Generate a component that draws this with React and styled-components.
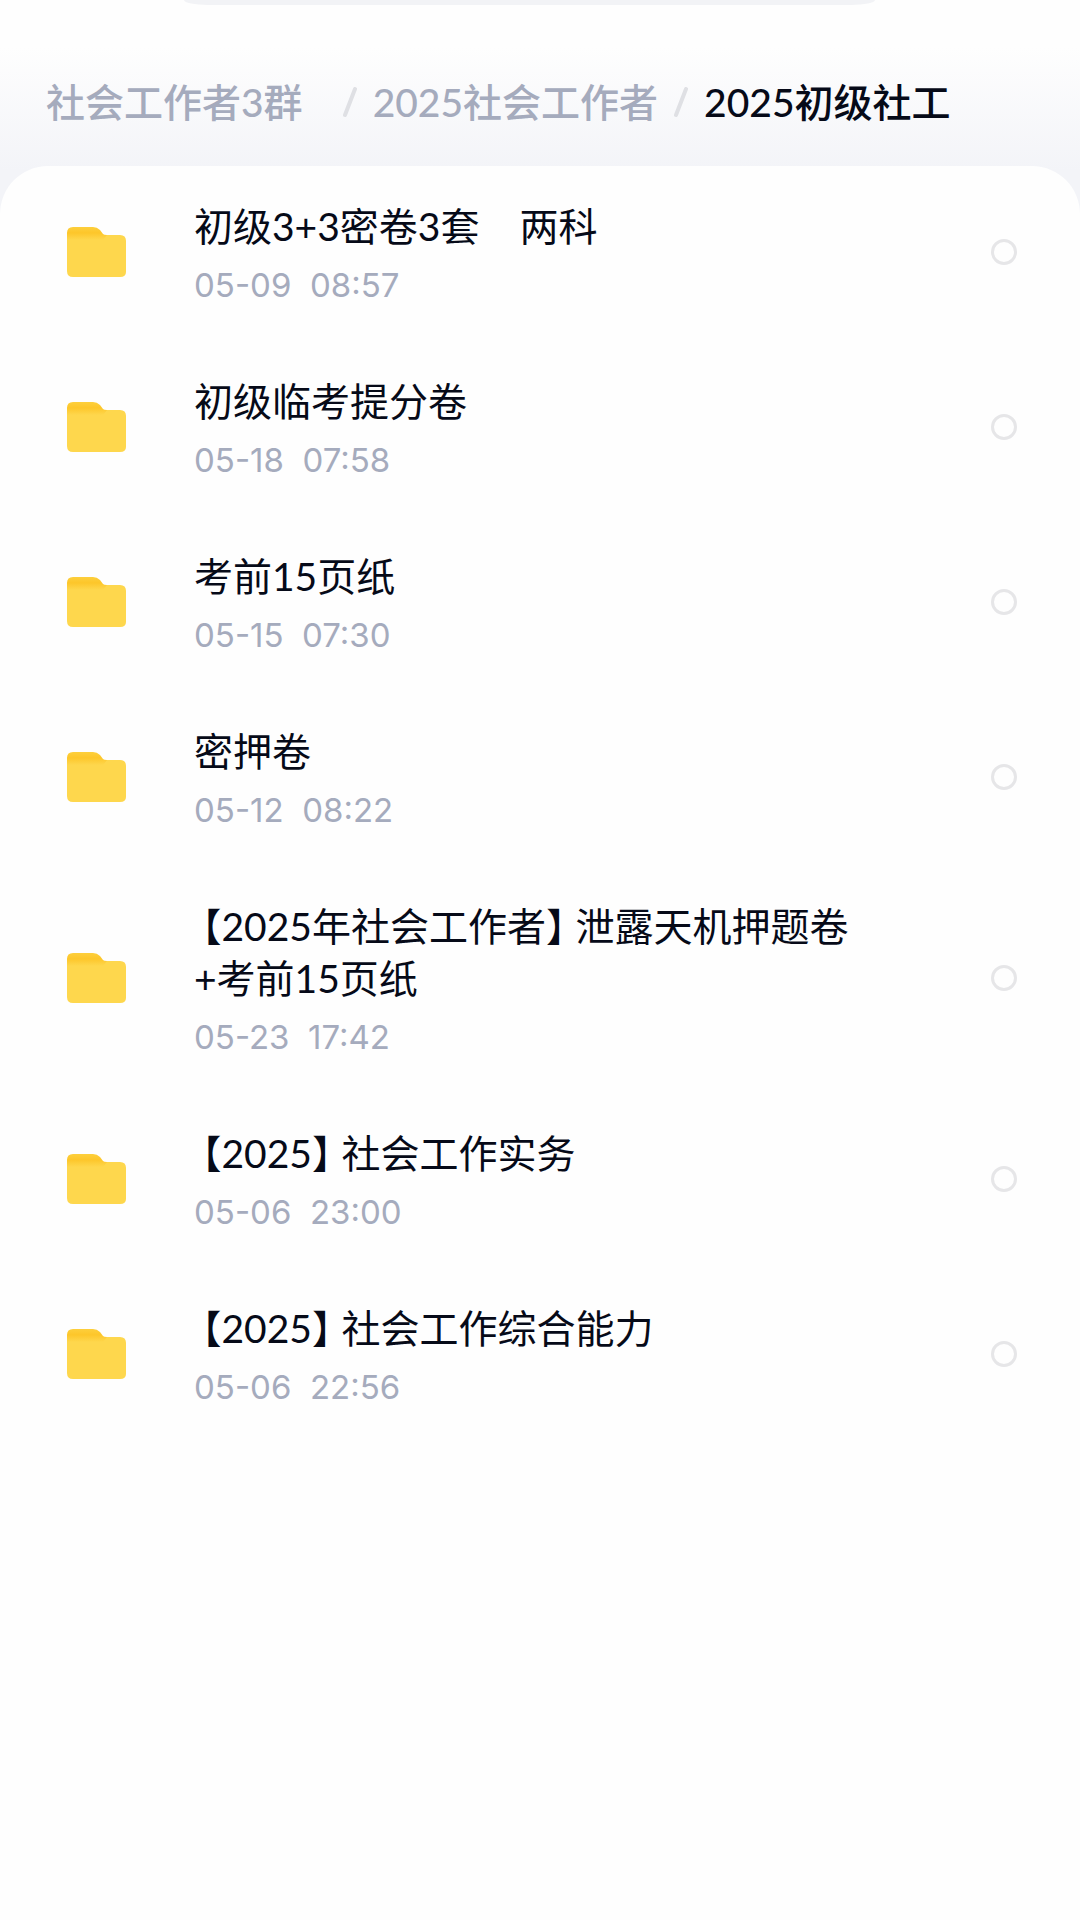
import React from "react";
import styled, { createGlobalStyle } from "styled-components";

const GlobalStyle = createGlobalStyle`
  *, *::before, *::after { box-sizing: border-box; }
  body {
    margin: 0;
    min-height: 100vh;
    background: #fefefe;
    color: #060a18;
    font-family: Lato, "Noto Sans CJK SC", sans-serif;
  }
`;

const Header = styled.header`
  background: linear-gradient(#fefefe 22%, #f3f4f8 80%);
  padding-bottom: 48px;
  margin-bottom: -48px;
`;

const SearchEdge = styled.div`
  height: 5px;
  margin: 0 19% 0 17%;
  background: #f2f3f6;
  border-radius: 0 0 24px 24px / 0 0 5px 5px;
`;

const Breadcrumb = styled.nav`
  display: flex;
  align-items: center;
  height: 161px;
  padding: 32px 46px 0;
  font-size: 39px;
  font-weight: 500;
  line-height: 52px;
  white-space: nowrap;
`;

const Crumb = styled.a`
  color: ${(p) => (p.$current ? "#060a18" : "#a5abbd")};
  text-decoration: none;
  padding-right: ${(p) => (p.$wide ? "24px" : "0")};
`;

const Slash = styled.svg`
  flex: none;
  width: 14px;
  height: 30px;
  margin: 0 16px;
`;

const Panel = styled.main`
  background: #fefefe;
  border-radius: 48px 48px 0 0;
`;

const List = styled.ul`
  list-style: none;
  margin: 0;
  padding: 0;
`;

const Row = styled.li`
  display: flex;
  align-items: center;
  padding: 30px 63px 34px 66px;
`;

const Folder = styled.svg`
  flex: none;
  width: 60px;
  height: 50px;
  margin-right: 68px;
`;

const Info = styled.label`
  flex: 1;
  min-width: 0;
  padding: 4px 120px 0 0;
`;

const Title = styled.span`
  display: block;
  font-size: 39px;
  line-height: 52px;
  white-space: pre-wrap;
  font-feature-settings: "halt";
  text-indent: ${(p) => (p.$bracketed ? "8px" : "0")};
`;

const Time = styled.time`
  display: block;
  margin-top: 11px;
  color: #a5abbd;
  font-family: Inter, "Noto Sans CJK SC", sans-serif;
  font-size: 33px;
  line-height: 44px;
  white-space: pre;
`;

const Pick = styled.input`
  appearance: none;
  flex: none;
  width: 26px;
  height: 26px;
  margin: 0;
  border: 3px solid #e6e6e8;
  border-radius: 50%;
  background: #fefefe;
  &:checked { background: #ffd84d; }
`;

const files = [
  { title: "初级3+3密卷3套    两科", time: "05-09  08:57" },
  { title: "初级临考提分卷", time: "05-18  07:58" },
  { title: "考前15页纸", time: "05-15  07:30" },
  { title: "密押卷", time: "05-12  08:22" },
  { title: "【2025年社会工作者】 泄露天机押题卷+考前15页纸", time: "05-23  17:42" },
  { title: "【2025】 社会工作实务", time: "05-06  23:00" },
  { title: "【2025】 社会工作综合能力", time: "05-06  22:56" },
];

const Separator = () => (
  <Slash viewBox="0 0 14 30" aria-hidden="true">
    <path d="M12 2 2 28" stroke="#dfe0e4" strokeWidth="4" strokeLinecap="round" />
  </Slash>
);

const FolderIcon = () => (
  <Folder viewBox="0 1 60 50" aria-hidden="true">
    <defs>
      <linearGradient id="tab" x1="0" y1="0" x2="0" y2="1">
        <stop offset="0" stopColor="#fdcf3c" />
        <stop offset="0.45" stopColor="#fdc62a" />
        <stop offset="1" stopColor="#fed74d" />
      </linearGradient>
    </defs>
    <path d="M1 13q0-4 4-4h49q6 0 6 6v31q0 5-6 5H7q-6 0-6-6z" fill="#fed74d" />
    <path d="M1 7q0-6 6-6h20q4 0 7 3l3 4q1 1 4 1l-4 5H1z" fill="url(#tab)" />
  </Folder>
);

export default function App() {
  return (
    <>
      <GlobalStyle />
      <Header>
        <SearchEdge />
        <Breadcrumb>
          <Crumb href="#group" $wide>社会工作者3群</Crumb>
          <Separator />
          <Crumb href="#year">2025社会工作者</Crumb>
          <Separator />
          <Crumb href="#level" $current aria-current="page">2025初级社工</Crumb>
        </Breadcrumb>
      </Header>
      <Panel>
        <List>
          {files.map((file, i) => (
            <Row key={file.title}>
              <FolderIcon />
              <Info htmlFor={`file-${i}`}>
                <Title $bracketed={file.title.startsWith("【")}>{file.title}</Title>
                <Time>{file.time}</Time>
              </Info>
              <Pick type="checkbox" id={`file-${i}`} />
            </Row>
          ))}
        </List>
      </Panel>
    </>
  );
}
